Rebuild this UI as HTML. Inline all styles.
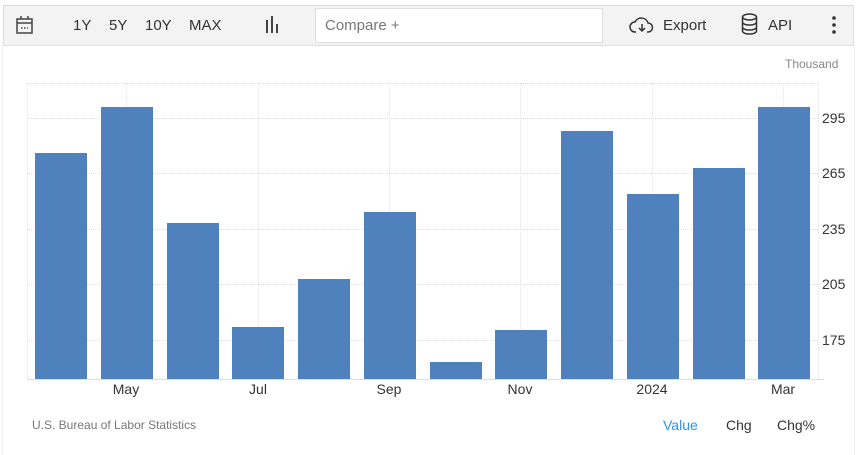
<!DOCTYPE html><html><head><style>
body{margin:0;width:857px;height:455px;background:#fff;font-family:"Liberation Sans",sans-serif;position:relative;overflow:hidden}
.a{position:absolute}
.tb{left:3px;top:5px;width:849px;height:39px;background:#f3f3f3;border:1px solid #ddd}
.t{font-size:15px;color:#333;top:17px}
.bar{position:absolute;background:#4f81bd;width:52px;bottom:76px}
.g{position:absolute;left:27px;width:791px;border-top:1px dotted #ddd}
.v{position:absolute;top:83px;height:296px;border-left:1px dotted #e3e3e3}
.yl{position:absolute;left:822px;font-size:14px;color:#333}
.xl{position:absolute;top:381px;font-size:14px;color:#333;width:60px;text-align:center}
</style></head><body>
<div class="a" style="left:2px;top:46px;width:851px;height:409px;border-left:1px solid #eee;border-right:1px solid #eee"></div>
<div class="a tb"></div>
<svg class="a" style="left:15px;top:15px" width="20" height="20" viewBox="0 0 20 20" fill="none" stroke="#444" stroke-width="1.5"><rect x="2" y="4" width="15" height="14"/><line x1="2" y1="8" x2="17" y2="8"/><line x1="6" y1="1" x2="6" y2="4"/><line x1="13" y1="1" x2="13" y2="4"/><line x1="6" y1="13" x2="13" y2="13" stroke-dasharray="1.5 1.5"/></svg>
<div class="a t" style="left:73px">1Y</div><div class="a t" style="left:109px">5Y</div><div class="a t" style="left:145px">10Y</div><div class="a t" style="left:189px">MAX</div>
<svg class="a" style="left:264px;top:16px" width="16" height="17" fill="#444"><rect x="2" y="4" width="2" height="13"/><rect x="7" y="0" width="2" height="17"/><rect x="12" y="8" width="2" height="9"/></svg>
<div class="a" style="left:315px;top:8px;width:286px;height:33px;background:#fff;border:1px solid #ddd"></div>
<div class="a" style="left:325px;top:17px;font-size:15px;color:#777">Compare +</div>
<svg class="a" style="left:629px;top:15px" width="26" height="20" viewBox="0 0 26 20" fill="none" stroke="#333" stroke-width="1.5"><path d="M7 17H6a5 5 0 0 1 0-10 7 7 0 0 1 13 1 4.5 4.5 0 0 1 0 9h-1"/><path d="M13 9v7M10 13l3 3 3-3"/></svg>
<div class="a t" style="left:663px">Export</div>
<svg class="a" style="left:741px;top:13px" width="17" height="22" viewBox="0 0 17 22" fill="none" stroke="#333" stroke-width="1.5"><ellipse cx="8.5" cy="4" rx="7" ry="3"/><path d="M1.5 4v14c0 1.7 3 3 7 3s7-1.3 7-3V4M1.5 9c0 1.7 3 3 7 3s7-1.3 7-3M1.5 14c0 1.7 3 3 7 3s7-1.3 7-3"/></svg>
<div class="a t" style="left:768px">API</div>
<svg class="a" style="left:831px;top:16px" width="6" height="18" fill="#333"><circle cx="3" cy="2" r="1.8"/><circle cx="3" cy="9" r="1.8"/><circle cx="3" cy="16" r="1.8"/></svg>
<div class="a" style="left:785px;top:57px;font-size:12px;color:#888">Thousand</div>
<div class="g" style="top:83px"></div><div class="g" style="top:118px"></div><div class="g" style="top:173px"></div><div class="g" style="top:229px"></div><div class="g" style="top:284px"></div><div class="g" style="top:340px"></div>
<div class="v" style="left:27px"></div><div class="v" style="left:126px"></div><div class="v" style="left:258px"></div><div class="v" style="left:389px"></div><div class="v" style="left:520px"></div><div class="v" style="left:652px"></div><div class="v" style="left:783px"></div><div class="v" style="left:818px"></div>
<div class="bar" style="left:35px;top:153px"></div>
<div class="bar" style="left:101px;top:107px"></div>
<div class="bar" style="left:167px;top:223px"></div>
<div class="bar" style="left:232px;top:327px"></div>
<div class="bar" style="left:298px;top:279px"></div>
<div class="bar" style="left:364px;top:212px"></div>
<div class="bar" style="left:430px;top:362px"></div>
<div class="bar" style="left:495px;top:330px"></div>
<div class="bar" style="left:561px;top:131px"></div>
<div class="bar" style="left:627px;top:194px"></div>
<div class="bar" style="left:693px;top:168px"></div>
<div class="bar" style="left:758px;top:107px"></div>
<div class="a" style="left:27px;top:379px;width:797px;border-top:1px solid #ddd"></div>
<div class="yl" style="top:110px">295</div><div class="yl" style="top:165px">265</div><div class="yl" style="top:221px">235</div><div class="yl" style="top:276px">205</div><div class="yl" style="top:332px">175</div>
<div class="xl" style="left:96px">May</div><div class="xl" style="left:228px">Jul</div><div class="xl" style="left:359px">Sep</div><div class="xl" style="left:490px">Nov</div><div class="xl" style="left:622px">2024</div><div class="xl" style="left:753px">Mar</div>
<div class="a" style="left:32px;top:418px;font-size:12px;color:#777">U.S. Bureau of Labor Statistics</div>
<div class="a" style="left:663px;top:417px;font-size:14px;color:#2f8fe8">Value</div>
<div class="a" style="left:726px;top:417px;font-size:14px;color:#333">Chg</div>
<div class="a" style="left:777px;top:417px;font-size:14px;color:#333">Chg%</div>
</body></html>
